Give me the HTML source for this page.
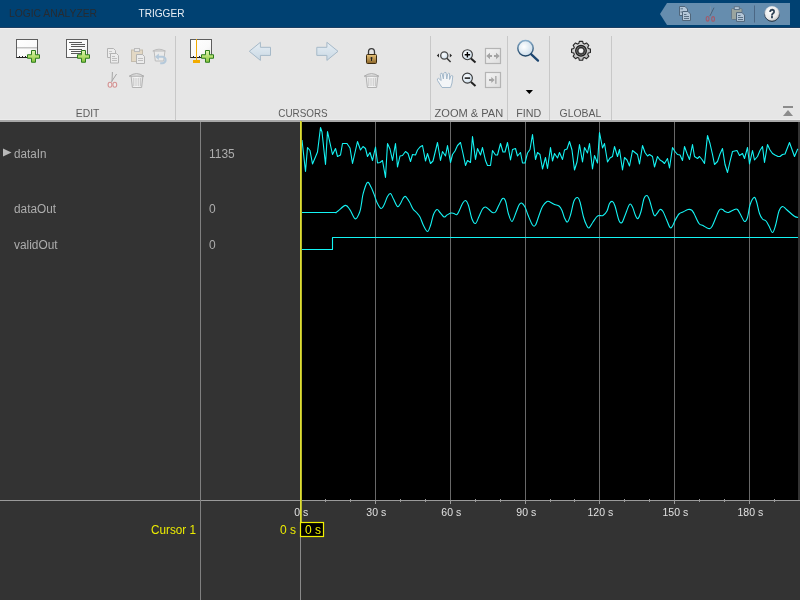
<!DOCTYPE html>
<html><head><meta charset="utf-8"><title>Logic Analyzer</title>
<style>
html,body{margin:0;padding:0;width:800px;height:600px;overflow:hidden;background:#333333;}
svg{display:block;position:absolute;left:0;top:0;will-change:transform;}
text{font-family:"Liberation Sans",sans-serif;}
</style></head>
<body>
<svg width="800" height="600" viewBox="0 0 800 600">
<defs>
  <linearGradient id="gPlus" x1="0" y1="0" x2="0" y2="1">
    <stop offset="0" stop-color="#e4f6b8"/><stop offset="0.5" stop-color="#b6e070"/><stop offset="1" stop-color="#86c23e"/>
  </linearGradient>
  <linearGradient id="gDoc" x1="0" y1="0" x2="1" y2="1">
    <stop offset="0" stop-color="#ffffff"/><stop offset="0.6" stop-color="#fafafa"/><stop offset="1" stop-color="#e6e6e6"/>
  </linearGradient>
  <linearGradient id="gArrow" x1="0" y1="0" x2="0" y2="1">
    <stop offset="0" stop-color="#e6eef4"/><stop offset="1" stop-color="#c9d8e4"/>
  </linearGradient>
  <linearGradient id="gLock" x1="0" y1="0" x2="0" y2="1">
    <stop offset="0" stop-color="#e8c47a"/><stop offset="1" stop-color="#8a6428"/>
  </linearGradient>
  <radialGradient id="gLens" cx="0.4" cy="0.4" r="0.7">
    <stop offset="0" stop-color="#ffffff"/><stop offset="1" stop-color="#c6d9e8"/>
  </radialGradient>
  <radialGradient id="gGear" cx="0.5" cy="0.5" r="0.5">
    <stop offset="0.2" stop-color="#f0f0f0"/><stop offset="0.45" stop-color="#3a3a3a"/><stop offset="0.7" stop-color="#9a9a9a"/><stop offset="1" stop-color="#5a5a5a"/>
  </radialGradient>
  <radialGradient id="gHelp" cx="0.4" cy="0.35" r="0.7">
    <stop offset="0" stop-color="#ffffff"/><stop offset="0.7" stop-color="#e8e8e8"/><stop offset="1" stop-color="#b0b0b0"/>
  </radialGradient>
  <radialGradient id="gGear2" cx="0.45" cy="0.4" r="0.6">
    <stop offset="0" stop-color="#f4f4f4"/><stop offset="1" stop-color="#b4b4b4"/>
  </radialGradient>
  <linearGradient id="gBox" x1="0" y1="0" x2="1" y2="1">
    <stop offset="0" stop-color="#f4f4f4"/><stop offset="1" stop-color="#dedede"/>
  </linearGradient>
  <linearGradient id="gRim" x1="0" y1="0" x2="0" y2="1">
    <stop offset="0" stop-color="#86abc8"/><stop offset="1" stop-color="#1f4466"/>
  </linearGradient>
  <linearGradient id="gTrash" x1="0" y1="0" x2="1" y2="0">
    <stop offset="0" stop-color="#e6e6e6"/><stop offset="0.5" stop-color="#f6f6f6"/><stop offset="1" stop-color="#dcdcdc"/>
  </linearGradient>
  <linearGradient id="gHelpRim" x1="0" y1="0" x2="0" y2="1">
    <stop offset="0" stop-color="#ffffff" stop-opacity="0.2"/><stop offset="0.6" stop-color="#44556a"/><stop offset="1" stop-color="#1b2a3a"/>
  </linearGradient>
</defs>

<!-- title bar -->
<rect x="0" y="0" width="800" height="27" fill="#004172"/>
<rect x="0" y="27" width="800" height="1" fill="#1b3f63"/>
<rect x="0" y="28" width="800" height="1" fill="#f3f0f0"/>
<text x="9" y="17" font-size="11" fill="#262b31" textLength="88" lengthAdjust="spacingAndGlyphs">LOGIC ANALYZER</text>
<text x="138.5" y="17" font-size="11" fill="#e8eef4" textLength="46" lengthAdjust="spacingAndGlyphs">TRIGGER</text>

<!-- quick access toolbar -->
<polygon points="660,14 667,3 790,3 790,25 667,25" fill="#668dae"/>
<rect x="754" y="5.5" width="1" height="17" fill="#4b6784"/>
<g stroke="#50667b" stroke-width="1" fill="#b4c7d8">
  <path d="M679.5,6.5 h5.5 l2.5,2.5 v6.5 h-8 z"/>
  <path d="M682.5,11.5 h5.5 l2.5,2.5 v6.5 h-8 z"/>
</g>
<path d="M680.5,8.8 h2.5 M680.5,12 h1.5 M684,14.5 h2.5 M684,16.5 h5 M684,18.5 h5" stroke="#50667b" stroke-width="0.9"/>
<g fill="none" stroke-width="0.9">
  <path d="M710.4,6.3 V15.6" stroke="#7f94a8"/>
  <path d="M714,7.7 L709.8,16.2" stroke="#4a5e72"/>
</g>
<ellipse cx="707.6" cy="18.8" rx="1.4" ry="2.3" fill="none" stroke="#a25b6b" stroke-width="1.1"/>
<ellipse cx="713.1" cy="18.9" rx="1.4" ry="2.3" fill="none" stroke="#a25b6b" stroke-width="1.1"/>
<rect x="731.5" y="8.5" width="10.5" height="11" rx="1" fill="#9ba59f" stroke="#667a8c" stroke-width="1"/>
<rect x="734.3" y="6.7" width="5" height="2.8" fill="#b8c8d6" stroke="#5f7488" stroke-width="1"/>
<path d="M736.5,12.6 h5.5 l2.5,2.5 v6.3 h-8 z" fill="#b4c7d8" stroke="#50667b" stroke-width="1"/>
<path d="M738,15.5 h2.5 M738,17.5 h5 M738,19.5 h5" stroke="#50667b" stroke-width="0.9"/>
<circle cx="772" cy="13.8" r="7.5" fill="url(#gHelp)" stroke="url(#gHelpRim)" stroke-width="1"/>
<text x="768.9" y="18.4" font-size="13.5" font-weight="bold" fill="#22364a" stroke="#22364a" stroke-width="0.4" textLength="6.4" lengthAdjust="spacingAndGlyphs">?</text>

<!-- toolstrip -->
<rect x="0" y="29" width="800" height="91" fill="#e6e6e6"/>
<rect x="0" y="119" width="800" height="1" fill="#ececec"/><rect x="0" y="120" width="800" height="2" fill="#a8a8a8"/>
<rect x="175" y="36" width="1" height="84" fill="#c8c8c8"/>
<rect x="430" y="36" width="1" height="84" fill="#c8c8c8"/>
<rect x="507" y="36" width="1" height="84" fill="#c8c8c8"/>
<rect x="549" y="36" width="1" height="84" fill="#c8c8c8"/>
<rect x="611" y="36" width="1" height="84" fill="#c8c8c8"/>

<g font-size="11" fill="#5c5c5c" text-anchor="middle">
<text x="87.6" y="117" textLength="23.6" lengthAdjust="spacingAndGlyphs">EDIT</text>
<text x="303" y="117" textLength="49.4" lengthAdjust="spacingAndGlyphs">CURSORS</text>
<text x="468.9" y="117" textLength="68.7" lengthAdjust="spacingAndGlyphs">ZOOM &amp; PAN</text>
<text x="528.7" y="117" textLength="25" lengthAdjust="spacingAndGlyphs">FIND</text>
<text x="580.4" y="117" textLength="41.7" lengthAdjust="spacingAndGlyphs">GLOBAL</text>
</g>

<!-- icon: new display -->
<g>
  <rect x="16.5" y="39.5" width="21" height="18" fill="url(#gDoc)" stroke="#5e5e5e" stroke-width="1"/>
  <rect x="17" y="47" width="20" height="1.5" fill="#c4c4c4"/>
  <path d="M16.5,57.5 H37.5 M19.5,57.5 v-1.5 M22.5,57.5 v-1.5 M25.5,57.5 v-1.5" stroke="#222" stroke-width="1"/>
</g>
<path d="M31.5,50.5 h4 v4.25 h4 v3.5 h-4 v4 h-4 v-4 h-4 v-3.5 h4 z" fill="url(#gPlus)" stroke="#2d7d1c" stroke-width="1"/>

<!-- icon: new text display -->
<g>
  <rect x="66.5" y="39.5" width="21" height="18" fill="url(#gDoc)" stroke="#5e5e5e" stroke-width="1"/>
  <path d="M69,42.5 h13 M71,44.5 h14 M71,46.5 h14 M69,49.5 h13 M71,51.5 h11 M71,53.5 h11" stroke="#5a5a5a" stroke-width="1"/>
</g>
<path d="M81.5,50.5 h4 v4.25 h4 v3.5 h-4 v4 h-4 v-4 h-4 v-3.5 h4 z" fill="url(#gPlus)" stroke="#2d7d1c" stroke-width="1"/>

<!-- disabled edit icons -->
<g opacity="0.45">
  <g transform="translate(107,48)">
    <path d="M0.5,0.5 h6 l2,2 v7 h-8 z" fill="#f4f4f4" stroke="#777" stroke-width="1"/>
    <path d="M2,3.5 h3 M2,5.5 h4" stroke="#888" stroke-width="0.8"/>
    <path d="M3.5,5.5 h6 l2,2 v7.5 h-8 z" fill="#f4f4f4" stroke="#777" stroke-width="1"/>
    <path d="M5,8.5 h3 M5,10.5 h5 M5,12.5 h5" stroke="#777" stroke-width="0.8"/>
  </g>
  <g transform="translate(131,48)">
    <rect x="0.5" y="2" width="11" height="11.5" fill="#e0c89c" stroke="#9c8a6a" stroke-width="1"/>
    <rect x="3.5" y="0.5" width="5" height="3" fill="#eee" stroke="#888" stroke-width="1"/>
    <path d="M5.5,6.5 h6 l2,2 v7 h-8 z" fill="#f4f4f4" stroke="#777" stroke-width="1"/>
    <path d="M7,10.5 h5 M7,12.5 h5" stroke="#777" stroke-width="0.8"/>
  </g>
  <g>
    <path d="M154,50.5 L155.3,61 h8.4 L165,50.5 z" fill="#f0f0f0" stroke="#8a8a8a" stroke-width="1"/>
    <path d="M152.8,51 q6.2,-3.6 12.4,0 z" fill="#dcdcdc" stroke="#8a8a8a" stroke-width="1"/>
    <path d="M158,56.8 h4.4 a3.2,3.2 0 0 1 0,6.4 h-2.2" fill="none" stroke="#7aa6cc" stroke-width="2.1"/>
    <path d="M155,56.8 l3.8,-3.3 v6.6 z" fill="#7aa6cc"/>
  </g>
  <g>
    <path d="M112.4,72 L112,81.5 M116.6,74 L111.4,81.8" stroke="#555" stroke-width="1" fill="none"/>
    <ellipse cx="110" cy="84.8" rx="1.9" ry="2.5" fill="#f4f4f4" stroke="#c03030" stroke-width="1.1"/>
    <ellipse cx="114.8" cy="84.8" rx="1.9" ry="2.5" fill="#f4f4f4" stroke="#c03030" stroke-width="1.1"/>
  </g>
</g>
<g transform="translate(-235,0)">
  <path d="M366,75.5 L367.4,87.5 h9.2 L378,75.5 z" fill="url(#gTrash)" stroke="#b2b2b2" stroke-width="1"/>
  <path d="M364.2,76.2 q7.3,-5.2 14.6,0 z" fill="#e2e2e2" stroke="#acacac" stroke-width="1"/>
  <path d="M368.8,78 v8 M371,78 v8 M373.2,78 v8 M375.4,78 v8" stroke="#c2c2c2" stroke-width="0.9"/>
</g>

<!-- cursor add icon -->
<g>
  <rect x="190.5" y="39.5" width="21" height="18" fill="url(#gDoc)" stroke="#5e5e5e" stroke-width="1"/>
  <path d="M190.5,57.5 H211.5 M193.5,57.5 v-1.5 M199.5,57.5 v-1.5" stroke="#222" stroke-width="1"/>
  <rect x="196" y="39" width="1" height="21.5" fill="#f2ab00"/>
  <rect x="193" y="60" width="7" height="3" fill="#f2ab00"/>
</g>
<path d="M205.5,50.5 h4 v4.25 h4 v3.5 h-4 v4 h-4 v-4 h-4 v-3.5 h4 z" fill="url(#gPlus)" stroke="#2d7d1c" stroke-width="1"/>

<!-- arrows -->
<path d="M249.3,51.3 L260.4,42.3 V47.3 H270.5 V55.4 H260.4 V60.4 Z" fill="url(#gArrow)" stroke="#a6b9c8" stroke-width="1"/>
<path d="M338,51.3 L326.9,42.3 V47.3 H316.8 V55.4 H326.9 V60.4 Z" fill="url(#gArrow)" stroke="#a6b9c8" stroke-width="1"/>

<!-- lock -->
<g>
  <path d="M368.5,55 v-3 a3,3.3 0 0 1 6,0 v3" fill="none" stroke="#3c3c3c" stroke-width="1.3"/>
  <rect x="366.5" y="54.5" width="10" height="9" rx="1" fill="url(#gLock)" stroke="#3b2a10" stroke-width="1"/>
  <circle cx="371.5" cy="58" r="1" fill="#222"/><rect x="371" y="58" width="1" height="3" fill="#222"/>
</g>
<!-- trash cursors (disabled) -->
<g transform="translate(0,0)">
  <path d="M366,75.5 L367.4,87.5 h9.2 L378,75.5 z" fill="url(#gTrash)" stroke="#b2b2b2" stroke-width="1"/>
  <path d="M364.2,76.2 q7.3,-5.2 14.6,0 z" fill="#e2e2e2" stroke="#acacac" stroke-width="1"/>
  <path d="M368.8,78 v8 M371,78 v8 M373.2,78 v8 M375.4,78 v8" stroke="#c2c2c2" stroke-width="0.9"/>
</g>

<!-- zoom & pan icons -->
<g>
  <!-- zoom x -->
  <circle cx="444.3" cy="55.5" r="3.6" fill="url(#gLens)" stroke="#4a4a4a" stroke-width="1.3"/>
  <path d="M446.9,58.2 L450.6,62" stroke="#3a3a3a" stroke-width="1.5"/>
  <path d="M436.8,55.5 l2.2,-2 v4 z M452,55.5 l-2.2,-2 v4 z" fill="#2a2a2a"/>
  <!-- zoom in -->
  <circle cx="467.4" cy="54.7" r="5" fill="url(#gLens)" stroke="#3a3a3a" stroke-width="1.1"/>
  <path d="M471,58.5 L475.5,62.5" stroke="#222" stroke-width="2"/>
  <path d="M464.7,54.7 h5.4 M467.4,52 v5.4" stroke="#000" stroke-width="1.4"/>
  <!-- zoom out -->
  <circle cx="467.4" cy="78.1" r="5" fill="url(#gLens)" stroke="#3a3a3a" stroke-width="1.1"/>
  <path d="M471,81.9 L475.5,85.9" stroke="#222" stroke-width="2"/>
  <path d="M464.7,78.1 h5.4" stroke="#000" stroke-width="1.4"/>
  <!-- fit boxes (disabled) -->
  <rect x="485.5" y="48.5" width="15" height="15" fill="url(#gBox)" stroke="#b4b4b4" stroke-width="1.2"/>
  <path d="M486.3,56 l3.7,-3.3 v2.3 h2 v2 h-2 v2.3 z M499.7,56 l-3.7,-3.3 v2.3 h-2 v2 h2 v2.3 z" fill="#a4a4a4"/>
  <rect x="485.5" y="72.5" width="15" height="15" fill="url(#gBox)" stroke="#b4b4b4" stroke-width="1.2"/>
  <path d="M494.6,80 l-3.3,-3 v2 h-2.3 v2 h2.3 v2 z" fill="#a4a4a4"/>
  <rect x="495.2" y="76" width="1.3" height="7.8" fill="#a4a4a4"/>
  <!-- hand (disabled) -->
  <path d="M442,87.5 L437.5,80.5 Q436.8,78.5 438.5,78.3 L441.2,80.5 L440.3,74.5 Q440.5,73 442,73.2 L443.4,79 L443.8,73.2 Q444.5,72 446,72.5 L446.8,79 L447.6,74 Q448.3,72.8 449.6,73.5 L449.6,79.5 L450.7,76 Q451.8,75 452.8,76 L452,83 L450.6,87.5 Z" fill="#f3f5f7" stroke="#a3b8ca" stroke-width="1" stroke-linejoin="round"/>
</g>

<!-- find -->
<circle cx="525.5" cy="48.3" r="7.7" fill="url(#gLens)" stroke="url(#gRim)" stroke-width="1.5"/>
<path d="M531.3,54.3 L538,60.6" stroke="#1d4670" stroke-width="2.3" stroke-linecap="round"/>
<path d="M525.7,90 h7.3 l-3.65,4 z" fill="#000"/>

<!-- gear -->
<g transform="translate(581,50.8)">
  <path d="M-2.22,-7.27 L-1.67,-9.45 L1.67,-9.45 L2.22,-7.27 L3.57,-6.71 L5.51,-7.86 L7.86,-5.51 L6.71,-3.57 L7.27,-2.22 L9.45,-1.67 L9.45,1.67 L7.27,2.22 L6.71,3.57 L7.86,5.51 L5.51,7.86 L3.57,6.71 L2.22,7.27 L1.67,9.45 L-1.67,9.45 L-2.22,7.27 L-3.57,6.71 L-5.51,7.86 L-7.86,5.51 L-6.71,3.57 L-7.27,2.22 L-9.45,1.67 L-9.45,-1.67 L-7.27,-2.22 L-6.71,-3.57 L-7.86,-5.51 L-5.51,-7.86 L-3.57,-6.71 Z" fill="url(#gGear2)" stroke="#262626" stroke-width="1.1" stroke-linejoin="round"/>
  <circle r="5.3" fill="#858585" stroke="#1e1e1e" stroke-width="1.3"/>
  <circle r="3.5" fill="#5e5e5e" stroke="#2a2a2a" stroke-width="1"/>
  <circle r="2.3" fill="#f2f2f2"/>
</g>

<!-- collapse -->
<rect x="783" y="106" width="10" height="2" fill="#8c8c8c"/>
<path d="M783,116 L788,110 L793,116 Z" fill="#8c8c8c"/>

<!-- lower panel -->
<rect x="0" y="122" width="800" height="478" fill="#333333"/>
<rect x="300" y="122" width="498" height="378" fill="#000000"/>
<!-- grid lines -->
<g fill="#686868"><rect x="375" y="122" width="1" height="378"/><rect x="450" y="122" width="1" height="378"/><rect x="525" y="122" width="1" height="378"/><rect x="599" y="122" width="1" height="378"/><rect x="674" y="122" width="1" height="378"/><rect x="749" y="122" width="1" height="378"/></g>
<rect x="0" y="500" width="800" height="1" fill="#9a9a9a"/>
<rect x="200" y="122" width="1" height="478" fill="#808080"/>
<rect x="300" y="500" width="1" height="100" fill="#8a8a8a"/>
<!-- minor ticks -->
<g fill="#9a9a9a"><rect x="325" y="499" width="1" height="3"/><rect x="350" y="499" width="1" height="3"/><rect x="400" y="499" width="1" height="3"/><rect x="425" y="499" width="1" height="3"/><rect x="475" y="499" width="1" height="3"/><rect x="500" y="499" width="1" height="3"/><rect x="550" y="499" width="1" height="3"/><rect x="574" y="499" width="1" height="3"/><rect x="624" y="499" width="1" height="3"/><rect x="649" y="499" width="1" height="3"/><rect x="699" y="499" width="1" height="3"/><rect x="724" y="499" width="1" height="3"/><rect x="774" y="499" width="1" height="3"/><rect x="300" y="500" width="1" height="4"/><rect x="375" y="500" width="1" height="4"/><rect x="450" y="500" width="1" height="4"/><rect x="525" y="500" width="1" height="4"/><rect x="599" y="500" width="1" height="4"/><rect x="674" y="500" width="1" height="4"/><rect x="749" y="500" width="1" height="4"/></g>

<!-- waveforms -->
<g fill="none" stroke="#14f4f4" stroke-width="1.1" stroke-linejoin="round">
  <polyline points="302,140 305.5,171.5 307.5,147.5 310,150.5 312.5,164 317.5,152 320.5,127.5 322,132 325.5,164.5 327.5,131.5 332.5,154.5 335.5,148.5 337.5,156.5 340.5,155 342.5,143.5 347,143.5 350,148 352.5,163.5 357.5,141.5 360.5,150 363,146.5 365.5,148.5 367.5,156.5 370,152.5 372.5,160.5 375.5,147 377.5,163 380,162.5 382.5,160.5 385.5,177.5 387.5,143.5 390,149 392.5,160.5 395.5,143.5 397.5,167 400,156 402.5,155.5 405.5,151.5 408,153.5 410.5,161.5 412.5,154.5 415.5,155 417.5,150 420,147 422.5,145.5 425.5,161 427.5,153.5 430.5,163.5 433,161 437.5,142.5 440.5,160.5 442.5,151.5 445.5,156 447.5,145.5 450.5,162.5 452.5,154.5 455,151 457.5,145.5 460.5,142.5 463,153.5 465.5,165.5 467.5,160.5 470.5,162.5 472.5,136.5 475.5,159.5 477.5,148.5 480.5,155 482.5,147.5 485.5,160.5 487.5,165.5 490.5,165.5 492.5,150.5 495.5,155 497.5,155 500.5,143.5 503,152 505,152 507.5,142.5 510.5,160 512.5,149.5 515.5,148.5 517.5,156 520.5,152.5 522.5,163 525,163 527.5,153 530,149.5 532.5,134.5 535.5,159.5 537.5,152.5 540,154.5 542.5,169 545.5,157.5 547.5,168.5 550.5,147.5 552.5,161 554.5,153.5 557.5,158 559.5,152.5 562.5,159.5 564.5,150 567,149 569.5,141.5 572,150 574.5,170 577,162 579.5,144.5 582.5,162 584.5,147.5 587.5,153 589.5,143.5 592.5,169 594.5,155.5 597.5,163 599.5,132.5 602.5,148 604.5,143.5 607.5,162 610,158 612.5,156.5 614.5,146.5 617.5,156.5 619.5,149.5 622.5,170 624.5,157.5 627,160 629.5,166 632.5,150.5 635,152.5 637.5,154.5 639.5,164 642.5,145.5 645,152.5 647.5,156 649.5,154.5 652.5,156.5 654.5,167 657.5,156.5 660,160 662.5,161.5 664.5,163.5 667.5,158.5 669.5,168 672.5,147.5 675,151.5 677.5,154.5 680,155 682.5,160.5 684.5,146.5 687,153.5 689.5,159.5 692.5,144.5 694.5,156.5 697.5,158.5 699.5,156.5 702,159.5 704.5,163.5 707.5,135.5 710,143.5 712.5,154.5 714.5,164.5 717.5,161.5 720,154 722.5,148.5 725,164.5 727.5,172.5 730,161.5 732.5,151.5 737,150.5 739.5,155.5 742.5,153.5 744.5,158.5 747.5,147.5 749.5,164 752.5,150.5 754.5,160 757.5,156.5 760,150.5 762.5,146.5 764.5,162.5 767.5,144.5 770,150 772.5,153.5 775,155 778,156.5 780,156.5 782.5,154.5 785,154 789.5,142.5 794.5,156.5 797.5,149.5 798,149"/>
  <path d="M301,212.5 L333,212.5 C338.79,212.50 334.92,212.75 335.75,212.5 C336.58,212.25 336.38,212.18 338,211 C339.62,209.82 343.50,205.58 345.5,205.4 C347.50,205.22 348.37,207.65 350,209.9 C351.63,212.15 353.67,218.58 355.3,218.9 C356.93,219.22 358.75,214.48 359.8,211.8 C360.85,209.12 361.05,205.80 361.6,202.8 C362.15,199.80 362.15,197.18 363.1,193.8 C364.05,190.42 365.98,183.63 367.3,182.5 C368.62,181.37 369.88,185.07 371,187 C372.12,188.93 373.00,191.53 374,194.1 C375.00,196.67 375.83,200.00 377,202.4 C378.17,204.80 379.83,208.07 381,208.5 C382.17,208.93 382.92,207.00 384,205 C385.08,203.00 386.42,198.42 387.5,196.5 C388.58,194.58 389.50,193.08 390.5,193.5 C391.50,193.92 392.33,196.83 393.5,199 C394.67,201.17 396.33,205.75 397.5,206.5 C398.67,207.25 399.58,204.83 400.5,203.5 C401.42,202.17 402.17,199.67 403,198.5 C403.83,197.33 404.42,195.92 405.5,196.5 C406.58,197.08 408.25,199.92 409.5,202 C410.75,204.08 411.83,207.25 413,209 C414.17,210.75 415.33,211.17 416.5,212.5 C417.67,213.83 418.83,214.83 420,217 C421.17,219.17 422.25,223.08 423.5,225.5 C424.75,227.92 426.33,231.50 427.5,231.5 C428.67,231.50 429.50,228.33 430.5,225.5 C431.50,222.67 432.42,217.17 433.5,214.5 C434.58,211.83 435.92,209.83 437,209.5 C438.08,209.17 438.83,211.25 440,212.5 C441.17,213.75 442.83,216.58 444,217 C445.17,217.42 445.83,215.67 447,215 C448.17,214.33 449.83,213.25 451,213 C452.17,212.75 453.00,213.25 454,213.5 C455.00,213.75 456.00,215.25 457,214.5 C458.00,213.75 459.08,210.83 460,209 C460.92,207.17 461.58,204.92 462.5,203.5 C463.42,202.08 464.50,200.17 465.5,200.5 C466.50,200.83 467.42,202.42 468.5,205.5 C469.58,208.58 470.83,216.00 472,219 C473.17,222.00 474.33,223.92 475.5,223.5 C476.67,223.08 477.83,218.92 479,216.5 C480.17,214.08 481.42,210.58 482.5,209 C483.58,207.42 484.42,206.92 485.5,207 C486.58,207.08 487.83,208.58 489,209.5 C490.17,210.42 491.42,212.08 492.5,212.5 C493.58,212.92 494.42,213.25 495.5,212 C496.58,210.75 497.83,207.25 499,205 C500.17,202.75 501.42,199.17 502.5,198.5 C503.58,197.83 504.50,198.42 505.5,201 C506.50,203.58 507.42,210.58 508.5,214 C509.58,217.42 510.75,221.75 512,221.5 C513.25,221.25 514.83,215.25 516,212.5 C517.17,209.75 518.08,206.58 519,205 C519.92,203.42 520.50,202.67 521.5,203 C522.50,203.33 523.92,205.00 525,207 C526.08,209.00 526.75,212.00 528,215 C529.25,218.00 531.25,223.33 532.5,225 C533.75,226.67 534.42,226.58 535.5,225 C536.58,223.42 537.83,218.58 539,215.5 C540.17,212.42 541.17,208.83 542.5,206.5 C543.83,204.17 545.75,202.25 547,201.5 C548.25,200.75 548.75,201.50 550,202 C551.25,202.50 553.00,203.83 554.5,204.5 C556.00,205.17 557.75,205.00 559,206 C560.25,207.00 561.08,208.50 562,210.5 C562.92,212.50 563.58,216.08 564.5,218 C565.42,219.92 566.50,222.50 567.5,222 C568.50,221.50 569.42,218.50 570.5,215 C571.58,211.50 572.83,203.92 574,201 C575.17,198.08 576.50,197.33 577.5,197.5 C578.50,197.67 579.00,198.75 580,202 C581.00,205.25 582.42,213.17 583.5,217 C584.58,220.83 585.58,223.17 586.5,225 C587.42,226.83 587.92,228.50 589,228 C590.08,227.50 591.75,223.83 593,222 C594.25,220.17 595.50,218.08 596.5,217 C597.50,215.92 597.92,215.75 599,215.5 C600.08,215.25 601.67,216.25 603,215.5 C604.33,214.75 605.92,213.00 607,211 C608.08,209.00 608.58,205.08 609.5,203.5 C610.42,201.92 611.58,201.08 612.5,201.5 C613.42,201.92 613.92,202.83 615,206 C616.08,209.17 617.83,217.75 619,220.5 C620.17,223.25 621.00,223.33 622,222.5 C623.00,221.67 623.75,218.50 625,215.5 C626.25,212.50 628.25,205.92 629.5,204.5 C630.75,203.08 631.50,205.17 632.5,207 C633.50,208.83 634.58,213.58 635.5,215.5 C636.42,217.42 637.08,219.17 638,218.5 C638.92,217.83 640.00,214.83 641,211.5 C642.00,208.17 643.00,201.17 644,198.5 C645.00,195.83 646.08,195.25 647,195.5 C647.92,195.75 648.33,196.75 649.5,200 C650.67,203.25 652.75,212.75 654,215 C655.25,217.25 656.00,214.42 657,213.5 C658.00,212.58 659.00,209.83 660,209.5 C661.00,209.17 661.92,209.83 663,211.5 C664.08,213.17 665.33,216.83 666.5,219.5 C667.67,222.17 669.00,226.42 670,227.5 C671.00,228.58 671.67,227.17 672.5,226 C673.33,224.83 673.92,222.50 675,220.5 C676.08,218.50 677.67,215.42 679,214 C680.33,212.58 681.50,212.75 683,212 C684.50,211.25 686.58,209.83 688,209.5 C689.42,209.17 690.50,209.33 691.5,210 C692.50,210.67 692.75,211.25 694,213.5 C695.25,215.75 697.50,221.50 699,223.5 C700.50,225.50 701.42,224.67 703,225.5 C704.58,226.33 707.00,228.33 708.5,228.5 C710.00,228.67 710.25,229.50 712,226.5 C713.75,223.50 717.25,213.33 719,210.5 C720.75,207.67 721.50,209.33 722.5,209.5 C723.50,209.67 724.00,211.00 725,211.5 C726.00,212.00 726.92,212.83 728.5,212.5 C730.08,212.17 733.00,210.00 734.5,209.5 C736.00,209.00 736.42,208.50 737.5,209.5 C738.58,210.50 739.83,213.50 741,215.5 C742.17,217.50 743.42,221.17 744.5,221.5 C745.58,221.83 746.58,220.25 747.5,217.5 C748.42,214.75 748.92,208.33 750,205 C751.08,201.67 752.92,198.08 754,197.5 C755.08,196.92 755.58,198.83 756.5,201.5 C757.42,204.17 758.50,210.58 759.5,213.5 C760.50,216.42 761.42,217.75 762.5,219 C763.58,220.25 764.92,219.83 766,221 C767.08,222.17 767.92,224.08 769,226 C770.08,227.92 771.42,232.58 772.5,232.5 C773.58,232.42 774.42,229.08 775.5,225.5 C776.58,221.92 777.83,214.17 779,211 C780.17,207.83 781.25,206.75 782.5,206.5 C783.75,206.25 784.58,207.92 786.5,209.5 C788.42,211.08 792.08,214.67 794,216 C795.92,217.33 797.33,217.25 798,217.5"/>
  <polyline points="302,249.5 332.5,249.5 332.5,237.5 798,237.5"/>
</g>

<!-- cursor -->
<rect x="300" y="121" width="1" height="401" fill="#dede33"/><rect x="301" y="121" width="1" height="401" fill="#b8b82a"/>

<!-- labels -->
<g font-size="12" fill="#adadad">
  <text x="14" y="158" textLength="32.4" lengthAdjust="spacingAndGlyphs">dataIn</text>
  <text x="14" y="213" textLength="42" lengthAdjust="spacingAndGlyphs">dataOut</text>
  <text x="14" y="249" textLength="43.6" lengthAdjust="spacingAndGlyphs">validOut</text>
  <text x="209" y="158" textLength="25.7" lengthAdjust="spacingAndGlyphs">1135</text>
  <text x="209" y="213">0</text>
  <text x="209" y="249">0</text>
</g>
<path d="M3,148.5 L11.5,152.5 L3,156.5 Z" fill="#b8b8b8"/>

<g font-size="10.5" fill="#e0e0e0" text-anchor="middle">
  <text x="301.3" y="516">0 s</text>
  <text x="376.3" y="516">30 s</text>
  <text x="451.3" y="516">60 s</text>
  <text x="526.3" y="516">90 s</text>
  <text x="600.3" y="516">120 s</text>
  <text x="675.3" y="516">150 s</text>
  <text x="750.3" y="516">180 s</text>
</g>

<g font-size="12" fill="#ecec00">
  <text x="151" y="534" textLength="45" lengthAdjust="spacingAndGlyphs">Cursor 1</text>
  <text x="296" y="534" text-anchor="end">0 s</text>
</g>
<rect x="300.5" y="522.5" width="23" height="14" fill="#000" stroke="#f0f000" stroke-width="1.2"/>
<text x="313" y="534" font-size="12" fill="#f2f200" text-anchor="middle">0 s</text>

</svg>
</body></html>
